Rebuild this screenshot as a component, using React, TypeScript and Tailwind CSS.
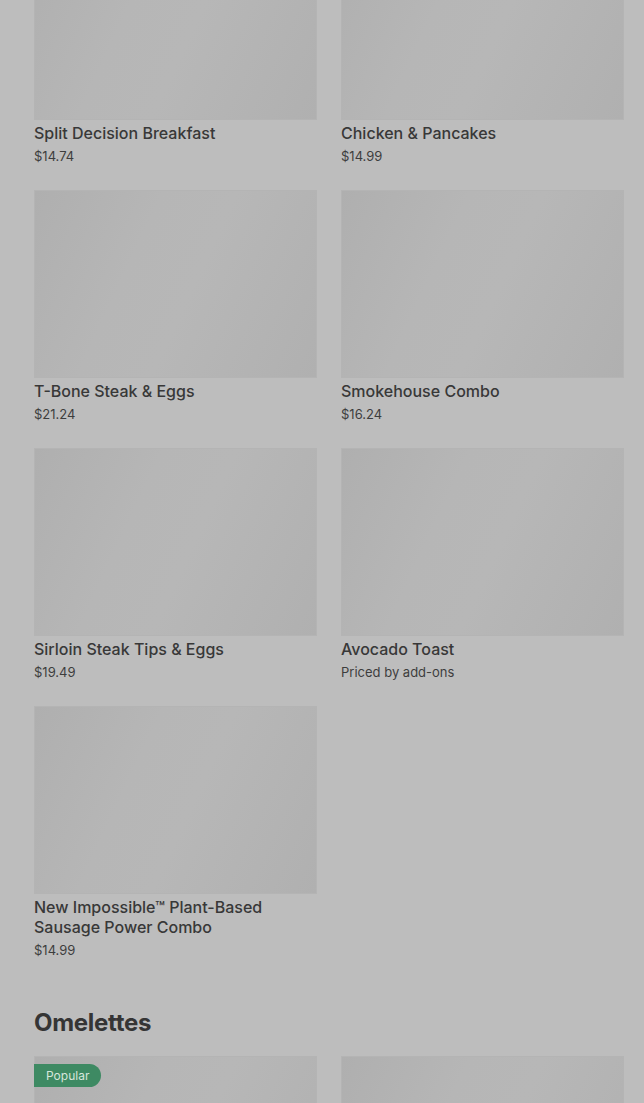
import React from "react";

type Item = { name: string; price: string };

const rows: Item[][] = [
  [
    { name: "Split Decision Breakfast", price: "$14.74" },
    { name: "Chicken & Pancakes", price: "$14.99" },
  ],
  [
    { name: "T-Bone Steak & Eggs", price: "$21.24" },
    { name: "Smokehouse Combo", price: "$16.24" },
  ],
  [
    { name: "Sirloin Steak Tips & Eggs", price: "$19.49" },
    { name: "Avocado Toast", price: "Priced by add-ons" },
  ],
  [{ name: "New Impossible™ Plant-Based Sausage Power Combo", price: "$14.99" }],
];

function Placeholder({ children }: { children?: React.ReactNode }) {
  return (
    <div className="relative h-[188px] w-full border border-[#b4b4b4] bg-[linear-gradient(115deg,#afafaf_0%,#b6b6b6_35%,#b7b7b7_55%,#b0b0b0_100%)]">
      {children}
    </div>
  );
}

function Card({ item }: { item: Item }) {
  return (
    <div className="flex flex-col">
      <Placeholder />
      <div className="mt-[3px] pr-10 text-[16px] font-medium leading-[20px] text-[#383838]">{item.name}</div>
      <div className="mt-1 text-[13px] leading-[18px] text-[#3d3d3d]">{item.price}</div>
    </div>
  );
}

export default function App() {
  return (
    <div
      className="min-h-[1103px] overflow-hidden bg-[#bdbdbd] pl-[34px] pr-[20px]"
      style={{ fontFamily: "Inter, 'Liberation Sans', sans-serif" }}
    >
      <div className="mt-[-68px] grid grid-cols-2 gap-x-6 gap-y-[25px]">
        {rows.flat().map((it, i) => (
          <Card key={i} item={it} />
        ))}
      </div>
      <h2 className="mt-[48px] text-[24px] font-bold leading-[32px] tracking-[-0.3px] text-[#353535]">Omelettes</h2>
      <div className="mt-[17px] grid grid-cols-2 gap-x-6">
        <Placeholder>
          <span className="absolute left-[-1px] top-[7px] flex h-[23px] items-center rounded-r-full bg-[#3e8a63] pl-3 pr-3 text-[12px] leading-none text-[#d6e6dc]">
            Popular
          </span>
        </Placeholder>
        <Placeholder />
      </div>
    </div>
  );
}
